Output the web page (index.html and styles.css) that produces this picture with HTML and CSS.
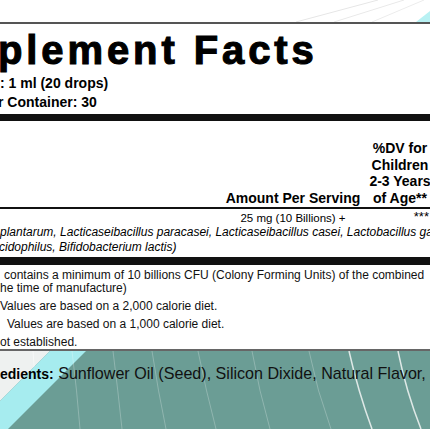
FILE: index.html
```html
<!DOCTYPE html>
<html lang="en">
<head>
    <meta charset="UTF-8">
    <meta name="viewport" content="width=device-width, initial-scale=1.0">
    <title>Supplement Facts</title>
    <link rel="stylesheet" href="styles.css">
</head>
<body>
<div class="page">
    <div class="top-art">
        <svg width="430" height="22" viewBox="0 0 430 22">
            <path d="M296 22 L378 0" stroke="#e6e6e6" stroke-width="1"/>
            <path d="M334 22 L404 0" stroke="#e9e9e9" stroke-width="1"/>
            <path d="M372 22 L424 0" stroke="#ececec" stroke-width="1"/>
            <polygon points="416,22 430,22 430,11" fill="#b8f1f3"/>
        </svg>
    </div>

    <div class="facts">
        <div class="title">plement Facts</div>
        <div class="serving">: 1 ml (20 drops)</div>
        <div class="serving shift-2">r Container: 30</div>
        <div class="bar"></div>

        <div class="head-row">
            <div></div>
            <div class="col-amount">Amount Per Serving</div>
            <div class="col-dv">%DV for<br>Children<br>2-3 Years<br>of Age**</div>
        </div>
        <div class="rule"></div>

        <div class="item-row">
            <div></div>
            <div class="col-amount">25 mg (10 Billions) +</div>
            <div class="col-stars">***</div>
        </div>
        <div class="item-desc">
            <div>plantarum, Lacticaseibacillus paracasei, Lacticaseibacillus casei, Lactobacillus gasseri,</div>
            <div class="shift-1">cidophilus, Bifidobacterium lactis)</div>
        </div>
        <div class="bar bar-low"></div>

        <div class="notes">
            <p class="pad-4">contains a minimum of 10 billions CFU (Colony Forming Units) of the combined<br><span class="shift-back">he time of manufacture)</span></p>
            <p class="shift-4">Values are based on a 2,000 calorie diet.</p>
            <p class="pad-7">Values are based on a 1,000 calorie diet.</p>
            <p class="shift-1">ot established.</p>
        </div>
    </div>

    <div class="bottom">
        <svg class="bottom-art" width="430" height="78" viewBox="0 0 430 78">
            <rect width="430" height="78" fill="#6b9d95"/>
            <polygon points="0,0 50,0 0,50" fill="#eef1f0"/>
            <path d="M33 0 Q36 25 34 50" stroke="#ffffff" stroke-opacity="0.5" fill="none"/>
            <polygon points="50,0 86,0 8,78 0,78 0,50" fill="#a6ecef"/>
            <g fill="none" stroke="#ffffff" stroke-opacity="0.25" stroke-width="1">
                <path d="M72 0 Q77 40 80 78"/>
                <path d="M113 0 Q118 40 122 78"/>
                <path d="M152 0 Q158 40 166 78"/>
                <path d="M198 0 Q206 40 216 78"/>
                <path d="M252 0 Q259 40 270 78"/>
                <path d="M309 0 Q317 40 331 78"/>
            </g>
            <g fill="none" stroke="#f2f6f5" stroke-opacity="0.85" stroke-width="1.5">
                <path d="M349 0 Q358 40 372 78"/>
                <path d="M398 0 Q406 40 421 78"/>
            </g>
        </svg>
        <p class="ingredients"><b>edients:</b> Sunflower Oil (Seed), Silicon Dixide, Natural Flavor,</p>
    </div>
</div>
</body>
</html>
```

FILE: styles.css
```css
html, body {
    margin: 0;
    padding: 0;
    overflow: hidden;
}
body {
    font-family: "Liberation Sans", Arial, sans-serif;
    color: #000;
    background: #fff;
}
.page {
    width: 430px;
    height: 430px;
    overflow: hidden;
}
.top-art {
    height: 22px;
}
.top-art svg {
    display: block;
}
.facts {
    width: 440px;
    background: #fff;
    border-top: 2px solid #555;
    border-bottom: 2px solid #666;
    padding-top: 6px;
    white-space: nowrap;
}
.title {
    font-size: 40px;
    line-height: 40px;
    font-weight: bold;
    letter-spacing: 3.9px;
    -webkit-text-stroke: 1.1px #000;
    margin-left: -2px;
}
.serving {
    font-size: 14px;
    line-height: 19px;
    font-weight: bold;
}
.title + .serving {
    margin-top: 4px;
}
.bar {
    height: 7px;
    background: #111;
    margin-top: 2px;
}
.bar-low {
    height: 8px;
    margin-top: 2px;
}
.head-row,
.item-row {
    display: grid;
    grid-template-columns: 218px 150px 64px;
    align-items: end;
}
.head-row {
    padding-top: 19px;
    padding-bottom: 1px;
    font-size: 14px;
    line-height: 16.5px;
    font-weight: bold;
}
.col-amount,
.col-dv {
    text-align: center;
}
.rule {
    height: 2px;
    background: #111;
}
.item-row {
    padding-top: 2px;
    font-size: 11.5px;
    line-height: 14px;
    align-items: start;
}
.col-stars {
    text-align: right;
    padding-right: 3px;
    font-size: 13px;
    line-height: 11px;
}
.item-desc {
    font-size: 12px;
    line-height: 15px;
    font-style: italic;
}
.notes {
    padding-top: 4px;
    font-size: 12px;
    line-height: 13px;
    color: #111;
}
.notes p {
    margin: 0;
}
.notes p + p {
    margin-top: 5px;
}
.shift-1 {
    margin-left: -1px;
}
.shift-2 {
    margin-left: -2px;
}
.shift-4 {
    margin-left: -4px;
}
.shift-back {
    margin-left: -4px;
}
.pad-4 {
    padding-left: 4px;
}
.pad-7 {
    padding-left: 7px;
}
.bottom {
    position: relative;
    height: 78px;
    overflow: hidden;
}
.bottom-art {
    position: absolute;
    left: 0;
    top: 0;
    display: block;
}
.ingredients {
    position: relative;
    margin: 0;
    padding-top: 13px;
    font-size: 16.1px;
    line-height: 18px;
    color: #111;
    white-space: nowrap;
}
.ingredients b {
    font-size: 14px;
    color: #000;
}
```
